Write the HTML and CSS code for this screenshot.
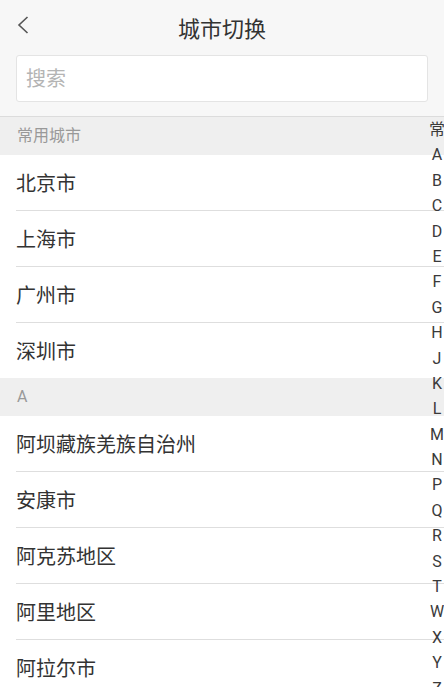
FILE: index.html
```html
<!DOCTYPE html>
<html lang="zh-CN">
<head>
    <meta charset="UTF-8">
    <meta name="viewport" content="width=device-width, initial-scale=1.0">
    <title>城市切换</title>
    <link rel="stylesheet" href="styles.css">
</head>
<body>

    <header class="top-bar">
        <a class="back" href="#">
            <svg width="14" height="20" viewBox="0 0 14 20">
                <path d="M11.5 2 L3 10 L11.5 18" fill="none" stroke="#555" stroke-width="1.6"/>
            </svg>
        </a>
        <h1>城市切换</h1>
    </header>

    <div class="search-box">
        <input type="text" placeholder="搜索">
    </div>

    <!-- 城市列表 -->
    <div class="city-list">
        <div class="group-title">常用城市</div>
        <div class="city">北京市</div>
        <div class="city">上海市</div>
        <div class="city">广州市</div>
        <div class="city">深圳市</div>

        <div class="group-title">A</div>
        <div class="city">阿坝藏族羌族自治州</div>
        <div class="city">安康市</div>
        <div class="city">阿克苏地区</div>
        <div class="city">阿里地区</div>
        <div class="city">阿拉尔市</div>

        <!-- 右侧字母索引 -->
        <ul class="letters">
            <li>常</li>
            <li>A</li><li>B</li><li>C</li><li>D</li><li>E</li><li>F</li>
            <li>G</li><li>H</li><li>J</li><li>K</li><li>L</li><li>M</li>
            <li>N</li><li>P</li><li>Q</li><li>R</li><li>S</li><li>T</li>
            <li>W</li><li>X</li><li>Y</li><li>Z</li>
        </ul>
    </div>

</body>
</html>
```

FILE: styles.css
```css
body {
    margin: 0;
    background-color: #f7f7f7;
    font-family: 'Roboto', 'Noto Sans CJK SC', sans-serif;
    color: #333;
    overflow: hidden;
}

.top-bar {
    position: relative;
    height: 52px;
    display: flex;
    align-items: center;
    justify-content: center;
}

.top-bar h1 {
    margin: 2px 0 0;
    font-size: 22px;
    font-weight: normal;
    color: #333;
}

.back {
    position: absolute;
    left: 16px;
    top: 15px;
    display: flex;
}

.search-box {
    padding: 3px 16px 14px;
    border-bottom: 1px solid #dcdcdc;
}

.search-box input {
    display: block;
    width: 100%;
    box-sizing: border-box;
    height: 47px;
    padding: 0 9px;
    border: 1px solid #e4e4e4;
    border-radius: 3px;
    background-color: white;
    font-family: inherit;
    font-size: 20px;
    outline: none;
}

.search-box input::placeholder {
    color: #b4b4b4;
}

.city-list {
    position: relative;
    background-color: white;
}

.group-title {
    height: 38px;
    line-height: 38px;
    padding-left: 17px;
    background-color: #efefef;
    color: #999;
    font-size: 16px;
}

.city {
    height: 52px;
    line-height: 52px;
    padding-top: 3px;
    margin-left: 16px;
    font-size: 20px;
    color: #333;
    border-bottom: 1px solid #dedede;
}

.city:has(+ .group-title) {
    border-bottom: none;
}

.letters {
    position: absolute;
    top: 0;
    right: -1px;
    width: 16px;
    margin: 0;
    padding: 0;
    list-style: none;
}

.letters li {
    height: 25.4px;
    line-height: 25.4px;
    text-align: center;
    font-size: 16px;
    color: #3a3a3a;
}
```
